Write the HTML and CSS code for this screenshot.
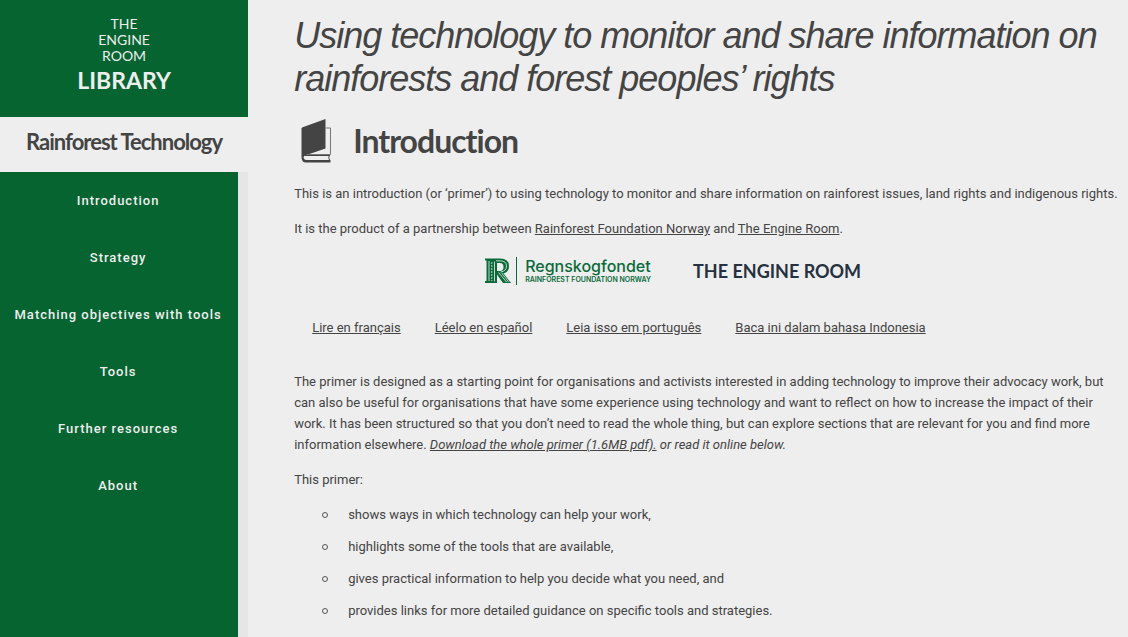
FILE: index.html
```html
<!DOCTYPE html>
<html lang="en">
<head>
<meta charset="utf-8">
<title>Rainforest Technology</title>
<link rel="stylesheet" href="styles.css">
</head>
<body>
<div class="page">
  <aside class="sidebar">
    <a class="brand" href="#">
      <span class="brand-small">THE<br>ENGINE<br>ROOM</span>
      <span class="brand-large">LIBRARY</span>
    </a>
    <h2 class="site-title">Rainforest Technology</h2>
    <nav class="menu">
      <a href="#">Introduction</a>
      <a href="#">Strategy</a>
      <a href="#">Matching objectives with tools</a>
      <a href="#">Tools</a>
      <a href="#">Further resources</a>
      <a href="#">About</a>
    </nav>
  </aside>
  <main class="content">
    <h1 class="title">Using technology to monitor and share information on rainforests and forest peoples’ rights</h1>
    <div class="section-head">
      <svg class="book" width="32" height="44" viewBox="0 0 32 44" aria-hidden="true">
        <path d="M1 8.500 24.500 0v29.500L4 36.500 1 39Z" fill="#444"/>
        <path d="M24.500 9h5v26.500H5.500" fill="none" stroke="#777"/>
        <path d="M28.500 36q-1.500 2.500 0 5M4 36.500h25" fill="none" stroke="#444"/>
        <path d="M.5 9h2v29q.3 3 3 3h24v2.500H5Q.5 43.500.5 38Z" fill="#444"/>
      </svg>
      <h2 class="section-title">Introduction</h2>
    </div>
    <p>This is an introduction (or ‘primer’) to using technology to monitor and share information on rainforest issues, land rights and indigenous rights.</p>
    <p>It is the product of a partnership between <a href="#">Rainforest Foundation Norway</a> and <a href="#">The Engine Room</a>.</p>
    <div class="partners">
      <div class="rfn">
        <svg width="27" height="26" viewBox="0 0 27 26" aria-hidden="true">
          <path d="M0 .5h15q9 0 9 7.500 0 6-5.500 7.500L26 25h-8l-6-8.500V25H0v-2h1.500V2.500H0ZM12 5v8h3q3.500 0 3.500-4T15 5Z" fill="#0a6b3a" fill-rule="evenodd"/>
          <g fill="none" stroke="#eee">
            <path d="M4 3v20M9.500 3.500v20" stroke-width=".8"/>
            <path d="M6.800 4v19" stroke-dasharray="2 1" stroke-width=".8"/>
            <path d="M11 2.800h4q6.500 0 6.500 5.200t-6 6M13.500 14.500l8 9.500M16.500 14.800l7 9" stroke-width=".8"/>
          </g>
        </svg>
        <div class="rfn-text">
          <span class="rfn-name">Regnskogfondet</span>
          <span class="rfn-sub">RAINFOREST FOUNDATION NORWAY</span>
        </div>
      </div>
      <span class="engine">THE ENGINE ROOM</span>
    </div>
    <div class="languages">
      <a href="#">Lire en français</a>
      <a href="#">Léelo en español</a>
      <a href="#">Leia isso em português</a>
      <a href="#">Baca ini dalam bahasa Indonesia</a>
    </div>
    <p>The primer is designed as a starting point for organisations and activists interested in adding technology to improve their advocacy work, but can also be useful for organisations that have some experience using technology and want to reflect on how to increase the impact of their work. It has been structured so that you don’t need to read the whole thing, but can explore sections that are relevant for you and find more information elsewhere. <em><a href="#">Download the whole primer (1.6MB pdf).</a> or read it online below.</em></p>
    <p>This primer:</p>
    <ul class="points">
      <li>shows ways in which technology can help your work,</li>
      <li>highlights some of the tools that are available,</li>
      <li>gives practical information to help you decide what you need, and</li>
      <li>provides links for more detailed guidance on specific tools and strategies.</li>
    </ul>
  </main>
</div>
</body>
</html>
```
FILE: styles.css
```css
*, *::before { box-sizing: border-box; }
body {
  margin: 0;
  background: #eee;
  color: #444;
  font: 13px/21px Roboto, sans-serif;
}
a { color: inherit; }
.page { display: flex; min-height: 100vh; }

.sidebar {
  flex: 0 0 22%;
  display: flex;
  flex-direction: column;
}
.brand {
  background: #056430;
  color: #eee;
  text-align: center;
  text-decoration: none;
  padding: 16px 0 20px;
  font-family: Lato, sans-serif;
}
.brand-small, .brand-large { display: block; }
.brand-small { font-size: 14px; line-height: 16px; }
.brand-large { font-size: 23px; line-height: 33px; font-weight: 700; }
.site-title, .section-title {
  margin: 0;
  font-family: Lato, sans-serif;
  font-weight: 700;
  letter-spacing: -1px;
}
.site-title {
  padding: 9px 0 14px;
  text-align: center;
  font-size: 22px;
  line-height: 32px;
}
.section-title { font-size: 32px; line-height: 44px; }
.menu {
  flex: 1;
  display: flex;
  flex-direction: column;
  background: #056430;
  border-right: 10px solid #e6e6e6;
}
.menu a {
  padding: 18px 2px 18px 0;
  color: #eee;
  text-align: center;
  text-decoration: none;
  font-weight: 500;
  letter-spacing: 1px;
}

.content { flex: 1; min-width: 0; padding: 14px 10px 0 46px; }
.title {
  margin: 0 0 19px;
  font: italic 400 36px/43px "Liberation Sans", Arial, sans-serif;
  letter-spacing: -1px;
}
.section-head {
  display: flex;
  align-items: center;
  gap: 20px;
  padding-left: 7px;
  margin-bottom: 20px;
}
.content p { margin: 0 0 14px; }

.partners {
  display: flex;
  align-items: center;
  gap: 42px;
  padding-left: 191px;
  margin: 18px 0 32px;
}
.rfn { display: flex; align-items: center; gap: 4px; color: #0a6b3a; }
.rfn-text {
  display: flex;
  flex-direction: column;
  border-left: 1px solid #0a6b3a;
  padding-left: 8px;
}
.rfn-name { font: 500 16px/18px Inter, sans-serif; }
.rfn-sub { font: 600 7px/10px Inter, sans-serif; }
.engine { color: #253040; font: 700 18px/28px Lato, sans-serif; }

.languages {
  display: flex;
  gap: 34px;
  padding-left: 18px;
  margin-bottom: 33px;
}
.points {
  display: flex;
  flex-direction: column;
  gap: 11px;
  margin: 0;
  padding-left: 54px;
  list-style: none;
}
.points li { display: flex; align-items: center; }
.points li::before {
  content: "";
  width: 6px;
  height: 6px;
  margin: 0 20px 0 -26px;
  border: 1px solid #555;
  border-radius: 50%;
}
```
